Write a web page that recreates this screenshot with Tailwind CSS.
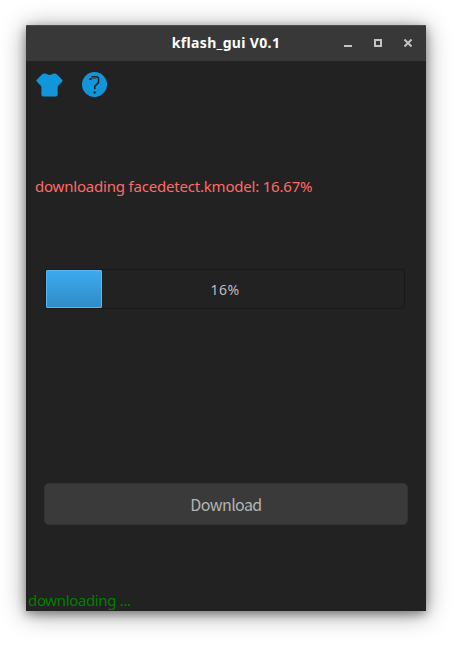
<!DOCTYPE html>
<html lang="en">
<head>
<meta charset="utf-8">
<title>kflash_gui V0.1</title>
<script src="https://cdn.jsdelivr.net/npm/@tailwindcss/browser@4"></script>
</head>
<body class="h-[656px] w-[467px] overflow-hidden bg-white pt-[25px] pl-[26px] font-['Noto_Sans',sans-serif]">
<main class="flex h-[586px] w-[400px] flex-col overflow-hidden rounded-t-[2px] bg-[#222222] shadow-[0_3px_10px_rgba(0,0,0,0.35),0_3px_25px_rgba(0,0,0,0.42)]">
  <header class="grid h-9 shrink-0 grid-cols-[1fr_auto_1fr] items-center border-t border-[#4b4b4b] bg-[#383838] pb-[2px]">
    <span></span>
    <h1 class="text-[14px] leading-5 font-bold tracking-[0.34px] whitespace-nowrap text-white">kflash_gui V0.1</h1>
    <div class="flex justify-end gap-[22px] pr-[14px] text-[#c4c4c4]">
      <svg class="size-2" viewBox="0 0 8 8" fill="currentColor" shape-rendering="crispEdges"><path d="M0 6h8v2H0z"/></svg>
      <svg class="size-2" viewBox="0 0 8 8" fill="none" stroke="currentColor" stroke-width="2" shape-rendering="crispEdges"><path d="M1 1h6v6H1z"/></svg>
      <svg class="size-2" viewBox="0 0 8 8" fill="none" stroke="currentColor" stroke-width="2"><path d="M.5.5l7 7M7.5.5l-7 7"/></svg>
    </div>
  </header>
  <nav class="flex h-[50px] shrink-0 gap-[19px] pt-[11px] pl-[10px]">
    <svg class="mt-px h-[25px] w-[27px]" viewBox="0 0 27 25" fill="#1296db"><path d="M8 .6Q9 .2 9.8.8Q13.5 3 17.2.8Q18 .2 19 .6L20.3 1.1Q21 1.4 21.6 2L26.2 6.7Q27 7.6 26.2 8.5L22.8 12.2Q21.9 12.9 21.7 14V21.5Q21.7 23.5 19.7 23.5H7.4Q5.4 23.5 5.4 21.5V14Q5.1 12.9 4.3 12.2L.8 8.5Q0 7.6.8 6.7L5.4 2Q6 1.4 6.7 1.1Z"/></svg>
    <svg class="h-[25px] w-[25px]" viewBox="0 0 25 25"><circle cx="12.5" cy="12.5" r="12.5" fill="#1296db"/><path d="M9.2 4.7H15.2L16.5 6V10.7L14.5 12.6L12.8 14.2V17" fill="none" stroke="#222" stroke-width="1.6"/><path d="M10 6.5H14.2" fill="none" stroke="#222" stroke-width=".5"/><path d="M7.6 6h2v2h-2zM11.6 19.5h2v2h-2z" fill="#222"/></svg>
  </nav>
  <p class="mt-[65px] ml-[9px] h-5 shrink-0 text-[15px] leading-5 tracking-[-0.2px] whitespace-nowrap text-[#ff6b68]">downloading facedetect.kmodel: 16.67%</p>
  <div class="mt-[73px] ml-[19px] grid h-10 w-[360px] shrink-0 rounded-[3px] border border-[#191919]">
    <div class="col-start-1 row-start-1 h-[38px] w-14 rounded-[1px] border border-[#5bb8f2] bg-linear-to-b from-[#3daaee] to-[#308cc6]"></div>
    <span class="col-start-1 row-start-1 self-center justify-self-center pt-[2px] text-[14px] leading-5 tracking-[0.4px] text-[#bebebe]">16%</span>
  </div>
  <button class="mt-[174px] ml-[18px] h-[42px] w-[364px] shrink-0 rounded-[5px] border border-[#343434] bg-[#3a3a3a] pb-px font-['Noto_Sans_CJK_SC',sans-serif] text-[16px] leading-6 tracking-[-0.6px] text-[#b4b4b4]">Download</button>
  <footer class="mt-auto flex h-[21px] shrink-0 items-start pl-[2px] text-[15px] leading-5 tracking-[-0.35px] text-[#008000]">downloading ...</footer>
</main>
</body>
</html>
